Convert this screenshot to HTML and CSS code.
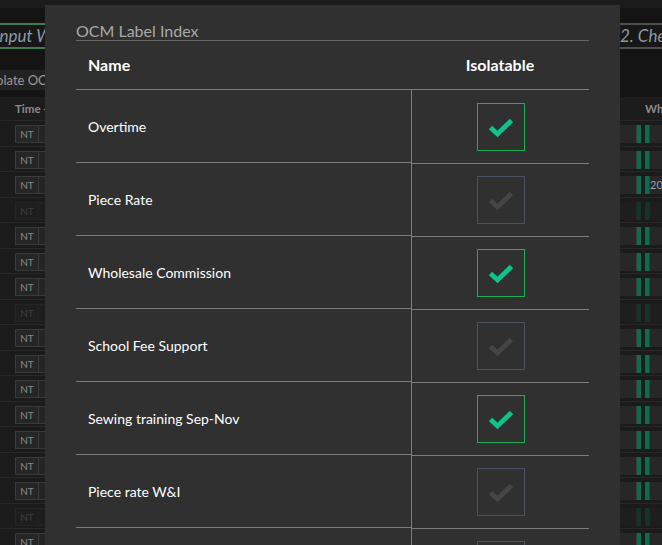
FILE: index.html
```html
<!DOCTYPE html>
<html>
<head>
<meta charset="utf-8">
<link rel="stylesheet" href="styles.css">
</head>
<body>
<div class="app">
  <div class="topbar"></div>
  <div class="tabs">
    <div class="tab tab-active">Input Wages</div>
    <div class="tab tab-next">2. Check Payroll</div>
  </div>
  <div class="toolbar"><span class="tool-btn">Isolate OCM Labels</span></div>
  <div class="grid-head"><span class="col-time">Time -</span><span class="col-wh">Wh</span></div>
  <div class="grid-rows">
    <div class="grow"><span class="nt">NT</span><span class="cell2"></span><div class="right"><span class="rc"></span><span class="bar"></span><span class="gap"></span><span class="bar"></span><span class="rc2"></span></div></div>
    <div class="grow"><span class="nt">NT</span><span class="cell2"></span><div class="right"><span class="rc"></span><span class="bar"></span><span class="gap"></span><span class="bar"></span><span class="rc2"></span></div></div>
    <div class="grow"><span class="nt">NT</span><span class="cell2"></span><div class="right"><span class="rc"></span><span class="bar"></span><span class="gap"></span><span class="bar"></span><span class="rc2">20</span></div></div>
    <div class="grow dim"><span class="nt">NT</span><span class="cell2"></span><div class="right"><span class="rc"></span><span class="bar"></span><span class="gap"></span><span class="bar"></span><span class="rc2"></span></div></div>
    <div class="grow"><span class="nt">NT</span><span class="cell2"></span><div class="right"><span class="rc"></span><span class="bar"></span><span class="gap"></span><span class="bar"></span><span class="rc2"></span></div></div>
    <div class="grow"><span class="nt">NT</span><span class="cell2"></span><div class="right"><span class="rc"></span><span class="bar"></span><span class="gap"></span><span class="bar"></span><span class="rc2"></span></div></div>
    <div class="grow"><span class="nt">NT</span><span class="cell2"></span><div class="right"><span class="rc"></span><span class="bar"></span><span class="gap"></span><span class="bar"></span><span class="rc2"></span></div></div>
    <div class="grow dim"><span class="nt">NT</span><span class="cell2"></span><div class="right"><span class="rc"></span><span class="bar"></span><span class="gap"></span><span class="bar"></span><span class="rc2"></span></div></div>
    <div class="grow"><span class="nt">NT</span><span class="cell2"></span><div class="right"><span class="rc"></span><span class="bar"></span><span class="gap"></span><span class="bar"></span><span class="rc2"></span></div></div>
    <div class="grow"><span class="nt">NT</span><span class="cell2"></span><div class="right"><span class="rc"></span><span class="bar"></span><span class="gap"></span><span class="bar"></span><span class="rc2"></span></div></div>
    <div class="grow"><span class="nt">NT</span><span class="cell2"></span><div class="right"><span class="rc"></span><span class="bar"></span><span class="gap"></span><span class="bar"></span><span class="rc2"></span></div></div>
    <div class="grow"><span class="nt">NT</span><span class="cell2"></span><div class="right"><span class="rc"></span><span class="bar"></span><span class="gap"></span><span class="bar"></span><span class="rc2"></span></div></div>
    <div class="grow"><span class="nt">NT</span><span class="cell2"></span><div class="right"><span class="rc"></span><span class="bar"></span><span class="gap"></span><span class="bar"></span><span class="rc2"></span></div></div>
    <div class="grow"><span class="nt">NT</span><span class="cell2"></span><div class="right"><span class="rc"></span><span class="bar"></span><span class="gap"></span><span class="bar"></span><span class="rc2"></span></div></div>
    <div class="grow"><span class="nt">NT</span><span class="cell2"></span><div class="right"><span class="rc"></span><span class="bar"></span><span class="gap"></span><span class="bar"></span><span class="rc2"></span></div></div>
    <div class="grow dim"><span class="nt">NT</span><span class="cell2"></span><div class="right"><span class="rc"></span><span class="bar"></span><span class="gap"></span><span class="bar"></span><span class="rc2"></span></div></div>
    <div class="grow"><span class="nt">NT</span><span class="cell2"></span><div class="right"><span class="rc"></span><span class="bar"></span><span class="gap"></span><span class="bar"></span><span class="rc2"></span></div></div>
  </div>

  <div class="modal">
    <div class="modal-title">OCM Label Index</div>
    <div class="thead">
      <div class="th-name">Name</div>
      <div class="th-iso">Isolatable</div>
    </div>
    <div class="trow">
      <div class="tname">Overtime</div>
      <div class="tcheck"><span class="cb on"><svg width="46" height="46" viewBox="0 0 46 46"><path d="M12.5 23.5 L19.5 30 L33.5 16.5" /></svg></span></div>
    </div>
    <div class="trow">
      <div class="tname">Piece Rate</div>
      <div class="tcheck"><span class="cb"><svg width="46" height="46" viewBox="0 0 46 46"><path d="M12.5 23.5 L19.5 30 L33.5 16.5" /></svg></span></div>
    </div>
    <div class="trow">
      <div class="tname">Wholesale Commission</div>
      <div class="tcheck"><span class="cb on"><svg width="46" height="46" viewBox="0 0 46 46"><path d="M12.5 23.5 L19.5 30 L33.5 16.5" /></svg></span></div>
    </div>
    <div class="trow">
      <div class="tname">School Fee Support</div>
      <div class="tcheck"><span class="cb"><svg width="46" height="46" viewBox="0 0 46 46"><path d="M12.5 23.5 L19.5 30 L33.5 16.5" /></svg></span></div>
    </div>
    <div class="trow">
      <div class="tname">Sewing training Sep-Nov</div>
      <div class="tcheck"><span class="cb on"><svg width="46" height="46" viewBox="0 0 46 46"><path d="M12.5 23.5 L19.5 30 L33.5 16.5" /></svg></span></div>
    </div>
    <div class="trow">
      <div class="tname">Piece rate W&amp;I</div>
      <div class="tcheck"><span class="cb"><svg width="46" height="46" viewBox="0 0 46 46"><path d="M12.5 23.5 L19.5 30 L33.5 16.5" /></svg></span></div>
    </div>
    <div class="trow">
      <div class="tname"></div>
      <div class="tcheck"><span class="cb"><svg width="46" height="46" viewBox="0 0 46 46"><path d="M12.5 23.5 L19.5 30 L33.5 16.5" /></svg></span></div>
    </div>
  </div>
</div>
</body>
</html>
```

FILE: styles.css
```css
html, body {
  margin: 0;
  padding: 0;
  background: #141414;
  font-family: Lato, "Open Sans", sans-serif;
  overflow: hidden;
}

.app {
  position: relative;
  width: 662px;
  height: 545px;
  overflow: hidden;
}

.topbar {
  height: 8px;
  background: #1b1b1b;
}

.tabs {
  display: flex;
  margin-top: 15px;
  height: 26px;
}

.tab {
  box-sizing: border-box;
  height: 26px;
  border-top: 2px solid;
  border-bottom: 2px solid;
  font-style: italic;
  font-size: 17px;
  line-height: 22px;
  color: #8e99a4;
  white-space: nowrap;
  overflow: hidden;
  background: #171717;
}

.tab-active {
  border-color: #3e7c4f;
  width: 330px;
  margin-left: -5px;
}

.tab-next {
  border-color: #4e4e4e;
  margin-left: auto;
  width: 44px;
  padding-left: 2px;
}

.toolbar {
  margin-top: 21px;
  height: 20px;
  display: flex;
}

.tool-btn {
  display: block;
  width: 200px;
  height: 20px;
  margin-left: -13px;
  background: #222222;
  color: #9a9a9a;
  font-size: 13px;
  line-height: 20px;
  white-space: nowrap;
}

.grid-head {
  margin-top: 7px;
  height: 24px;
  box-sizing: border-box;
  background: #1c1c1c;
  border-bottom: 1px solid #262626;
  display: flex;
  align-items: center;
  font-weight: 700;
  font-size: 11.5px;
  color: #8a8a8a;
}

.col-time {
  margin-left: 15px;
  white-space: nowrap;
}

.col-wh {
  margin-left: auto;
  width: 17px;
  white-space: nowrap;
  overflow: hidden;
}

.grow {
  box-sizing: border-box;
  height: 25.5px;
  padding-top: 4px;
  border-bottom: 1px solid #282828;
  background: #1b1b1b;
  display: flex;
  align-items: flex-start;
}

.nt {
  box-sizing: border-box;
  width: 24px;
  height: 18px;
  margin-left: 15px;
  border: 1px solid #3a3a3a;
  background: #262626;
  color: #8a8a8a;
  font-size: 10px;
  line-height: 16px;
  text-align: center;
}

.cell2 {
  box-sizing: border-box;
  width: 60px;
  height: 18px;
  border: 1px solid #3a3a3a;
  border-left: none;
  background: #242424;
}

.right {
  margin-left: auto;
  display: flex;
  height: 18px;
}

.rc {
  width: 36px;
  height: 18px;
  background: #272727;
  border-right: 1px solid #3c3c3c;
}

.bar {
  width: 4px;
  height: 18px;
  background: #0a6d4e;
}

.gap {
  width: 4px;
  height: 18px;
  background: #1c1c1c;
}

.rc2 {
  box-sizing: border-box;
  width: 13px;
  height: 18px;
  background: #272727;
  border-left: 1px solid #3c3c3c;
  color: #9aa2aa;
  font-size: 11px;
  line-height: 18px;
  white-space: nowrap;
  overflow: hidden;
}

.grow.dim .nt,
.grow.dim .cell2,
.grow.dim .right {
  opacity: 0.3;
}

/* Modal overlay */
.modal {
  position: absolute;
  left: 45px;
  top: 5px;
  width: 575px;
  height: 560px;
  box-sizing: border-box;
  padding: 0 31px;
  background: #303030;
}

.modal-title {
  padding-top: 17px;
  font-size: 16px;
  line-height: 18px;
  color: #a9a9a9;
  border-bottom: 1px solid #666666;
}

.thead {
  display: grid;
  grid-template-columns: 335px 178px;
  height: 49px;
  box-sizing: border-box;
  border-bottom: 1px solid #7d7d7d;
  font-weight: 700;
  font-size: 16px;
  line-height: 48px;
  color: #ffffff;
}

.th-name {
  padding-left: 12px;
}

.th-iso {
  text-align: center;
}

.trow {
  display: grid;
  grid-template-columns: 335px 178px;
}

.tname {
  height: 72px;
  border-bottom: 1px solid #7d7d7d;
  padding-left: 12px;
  display: flex;
  align-items: center;
  font-size: 14px;
  color: #ffffff;
}

.tcheck {
  box-sizing: border-box;
  height: 73px;
  border-left: 1px solid #7d7d7d;
  box-shadow: 0 1px 0 #7d7d7d;
  display: flex;
  align-items: center;
  justify-content: center;
}

.cb {
  box-sizing: border-box;
  width: 48px;
  height: 48px;
  border: 1px solid #4a5363;
  display: block;
}

.cb svg {
  display: block;
}

.cb path {
  fill: none;
  stroke: #454545;
  stroke-width: 4.8;
  stroke-linejoin: miter;
  stroke-linecap: butt;
}

.cb.on {
  border-color: #1fae52;
}

.cb.on path {
  stroke: #12c28c;
}
```
